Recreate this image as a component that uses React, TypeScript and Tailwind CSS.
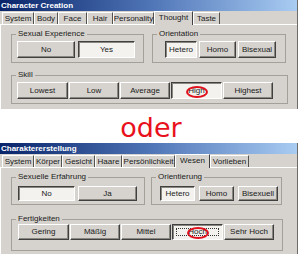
import React from 'react'

const font = { fontFamily: '"Liberation Sans", Arial, sans-serif' }

type BtnProps = {
  label: string
  w: number
  h: number
  pressed?: boolean
  focus?: boolean
  circled?: boolean
}

function Btn({ label, w, h, pressed, focus, circled }: BtnProps) {
  const look = pressed
    ? 'bg-[#f3f2ef] border-t-[#404040] border-l-[#404040] border-b-white border-r-white shadow-[inset_1px_1px_0_#8a8780]'
    : 'bg-[#d6d3ce] border-t-white border-l-white border-b-[#404040] border-r-[#404040] shadow-[inset_-1px_-1px_0_#8a8780]'
  return (
    <div
      className={`relative flex shrink-0 items-center justify-center border text-[8px] leading-none text-[#1a1a1a] ${look}`}
      style={{ width: w, height: h }}
    >
      {focus && <div className="absolute inset-[3px] border border-dotted border-[#333]" />}
      <span className="relative">{label}</span>
      {circled && (
        <div className="absolute left-1/2 top-[calc(50%+1px)] h-[12px] w-[22px] -translate-x-1/2 -translate-y-1/2 rounded-[50%] border-2 border-[#e0101c]" />
      )}
    </div>
  )
}

function Group({ legend, w, h, children, inner }: { legend: string; w: number; h: number; children: React.ReactNode; inner: string }) {
  return (
    <fieldset className="shrink-0 border border-[#a3a09a]" style={{ width: w, height: h }}>
      <legend className="ml-[4px] px-[2px] text-[8px] leading-[8px] text-[#1a1a1a]">{legend}</legend>
      <div className={`flex ${inner}`}>{children}</div>
    </fieldset>
  )
}

type Tab = { label: string; w: number; active?: boolean }

function Window({ title, tabs, children, bodyH }: { title: string; tabs: Tab[]; children: React.ReactNode; bodyH: number }) {
  return (
    <div className="flex w-[298px] flex-col border-r border-[#6e6c68] bg-[#d6d3ce]" style={font}>
      <div className="flex h-[11px] items-center bg-gradient-to-r from-[#0a246a] via-[#4f74b6] to-[#a9ccf2] pl-[1px] text-[8px] font-bold leading-none text-white">
        {title}
      </div>
      <div className="flex h-[13px] items-end pl-[2px]">
        {tabs.map(t => (
          <div
            key={t.label}
            className={
              t.active
                ? 'relative z-10 -mb-px flex h-[14px] items-start justify-center border-t border-l border-r border-t-white border-l-white border-r-[#404040] bg-[#d6d3ce] pt-[2px] text-[8px] leading-none text-[#1a1a1a]'
                : 'flex h-[12px] items-center justify-center border-t border-l border-r border-t-white border-l-white border-r-[#55534f] text-[8px] leading-none text-[#1a1a1a]'
            }
            style={{ width: t.w }}
          >
            {t.label}
          </div>
        ))}
      </div>
      <div className="border-t border-l border-white pl-[10px]" style={{ height: bodyH }}>
        {children}
      </div>
    </div>
  )
}

export default function App() {
  return (
    <div className="flex h-[255px] w-[300px] flex-col overflow-hidden bg-white">
      <Window
        title="Character Creation"
        bodyH={85}
        tabs={[
          { label: 'System', w: 32 },
          { label: 'Body', w: 24 },
          { label: 'Face', w: 29 },
          { label: 'Hair', w: 26 },
          { label: 'Personality', w: 41 },
          { label: 'Thought', w: 39, active: true },
          { label: 'Taste', w: 27 },
        ]}
      >
        <div className="flex gap-[8px] pt-[5px]">
          <Group legend="Sexual Experience" w={133} h={33} inner="mt-[3px] pl-[5px] gap-[3px]">
            <Btn label="No" w={58} h={17} />
            <Btn label="Yes" w={57} h={17} pressed />
          </Group>
          <Group legend="Orientation" w={134} h={33} inner="mt-[3px] pl-[12px] gap-[2px]">
            <Btn label="Hetero" w={32} h={17} pressed />
            <Btn label="Homo" w={37} h={17} />
            <Btn label="Bisexual" w={38} h={17} />
          </Group>
        </div>
        <div className="mt-[8px]">
          <Group legend="Skill" w={277} h={33} inner="mt-[3px] pl-[5px] gap-[1px]">
            <Btn label="Lowest" w={51} h={17} />
            <Btn label="Low" w={50} h={17} />
            <Btn label="Average" w={50} h={17} />
            <Btn label="High" w={51} h={17} pressed circled />
            <Btn label="Highest" w={50} h={17} />
          </Group>
        </div>
      </Window>

      <div className="flex h-[34px] items-start justify-center pl-[2px] pt-[4px] text-[27px] leading-[30px] text-[#e8101c]" style={{ fontFamily: '"DejaVu Sans", sans-serif' }}>
        oder
      </div>

      <Window
        title="Charaktererstellung"
        bodyH={87}
        tabs={[
          { label: 'System', w: 32 },
          { label: 'Körper', w: 28 },
          { label: 'Gesicht', w: 33 },
          { label: 'Haare', w: 27 },
          { label: 'Persönlichkeit', w: 53 },
          { label: 'Wesen', w: 35, active: true },
          { label: 'Vorlieben', w: 39 },
        ]}
      >
        <div className="flex gap-[6px] pt-[5px]">
          <Group legend="Sexuelle Erfahrung" w={134} h={32} inner="mt-[5px] pl-[6px] gap-[3px]">
            <Btn label="No" w={57} h={15} pressed />
            <Btn label="Ja" w={59} h={15} />
          </Group>
          <Group legend="Orientierung" w={131} h={32} inner="mt-[5px] pl-[8px] gap-[4px]">
            <Btn label="Hetero" w={35} h={15} pressed />
            <Btn label="Homo" w={35} h={15} />
            <Btn label="Bisexuell" w={40} h={15} />
          </Group>
        </div>
        <div className="mt-[10px]">
          <Group legend="Fertigkeiten" w={272} h={36} inner="mt-[1px] pl-[6px] gap-[1px]">
            <Btn label="Gering" w={51} h={16} />
            <Btn label="Mäßig" w={50} h={16} />
            <Btn label="Mittel" w={50} h={16} />
            <Btn label="Hoch" w={51} h={16} pressed focus circled />
            <Btn label="Sehr Hoch" w={50} h={16} />
          </Group>
        </div>
      </Window>
    </div>
  )
}
